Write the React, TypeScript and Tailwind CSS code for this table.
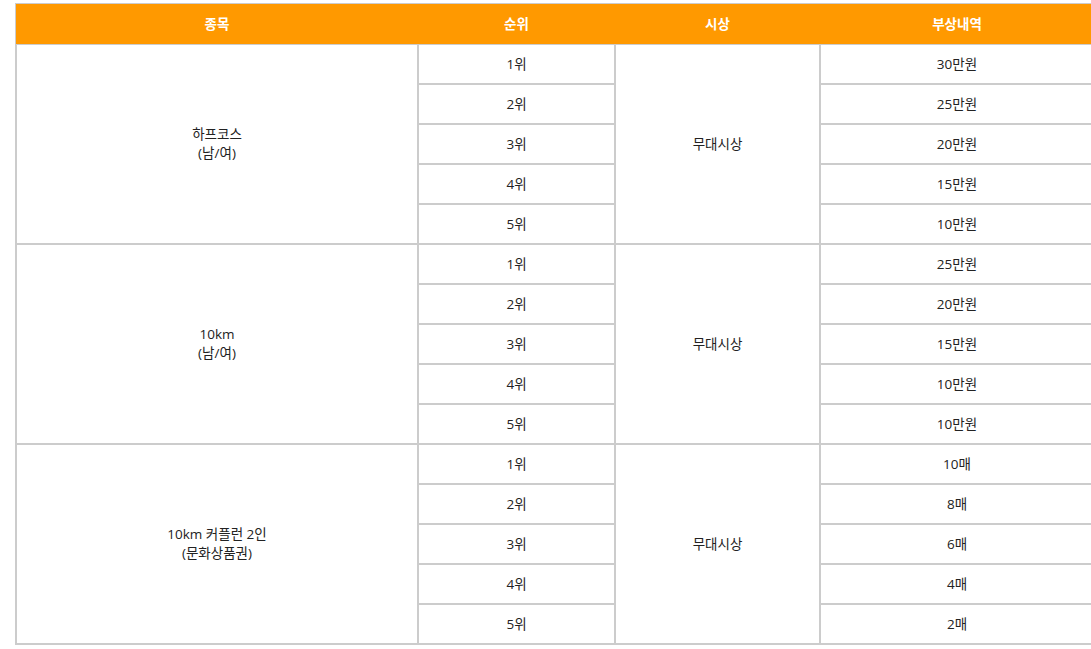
import React from "react";

type Group = { name: string[]; prizes: string[] };

const groups: Group[] = [
  { name: ["하프코스", "(남/여)"], prizes: ["30만원", "25만원", "20만원", "15만원", "10만원"] },
  { name: ["10km", "(남/여)"], prizes: ["25만원", "20만원", "15만원", "10만원", "10만원"] },
  { name: ["10km 커플런 2인", "(문화상품권)"], prizes: ["10매", "8매", "6매", "4매", "2매"] },
];

const td = "border border-[#cccccc] p-0 h-[40px] text-center align-middle";

export default function App() {
  return (
    <div
      className="w-[1091px] h-[649px] overflow-hidden bg-white text-[#222222] text-[13.5px]"
      style={{ fontFamily: '"Open Sans", "Noto Sans CJK KR", sans-serif' }}
    >
      <div className="pt-[3px] pl-[15px]">
        <table className="w-[1080px] table-fixed border-separate border-spacing-0 border border-[#cccccc]">
          <colgroup>
            <col className="w-[402px]" />
            <col className="w-[197px]" />
            <col className="w-[205px]" />
            <col className="w-[274px]" />
          </colgroup>
          <thead>
            <tr className="h-[40px] bg-[#ff9900] text-white font-bold">
              <th className="p-0 h-[40px] font-bold">종목</th>
              <th className="p-0 h-[40px] font-bold">순위</th>
              <th className="p-0 h-[40px] font-bold">시상</th>
              <th className="p-0 h-[40px] font-bold">부상내역</th>
            </tr>
          </thead>
          <tbody>
            {groups.map((g, gi) =>
              g.prizes.map((p, i) => (
                <tr key={`${gi}-${i}`}>
                  {i === 0 && (
                    <td rowSpan={5} className={`${td} leading-[19px]`}>
                      {g.name.map((l) => (
                        <div key={l}>{l}</div>
                      ))}
                    </td>
                  )}
                  <td className={td}>{i + 1}위</td>
                  {i === 0 && (
                    <td rowSpan={5} className={td}>
                      무대시상
                    </td>
                  )}
                  <td className={td}>{p}</td>
                </tr>
              ))
            )}
          </tbody>
        </table>
      </div>
    </div>
  );
}
